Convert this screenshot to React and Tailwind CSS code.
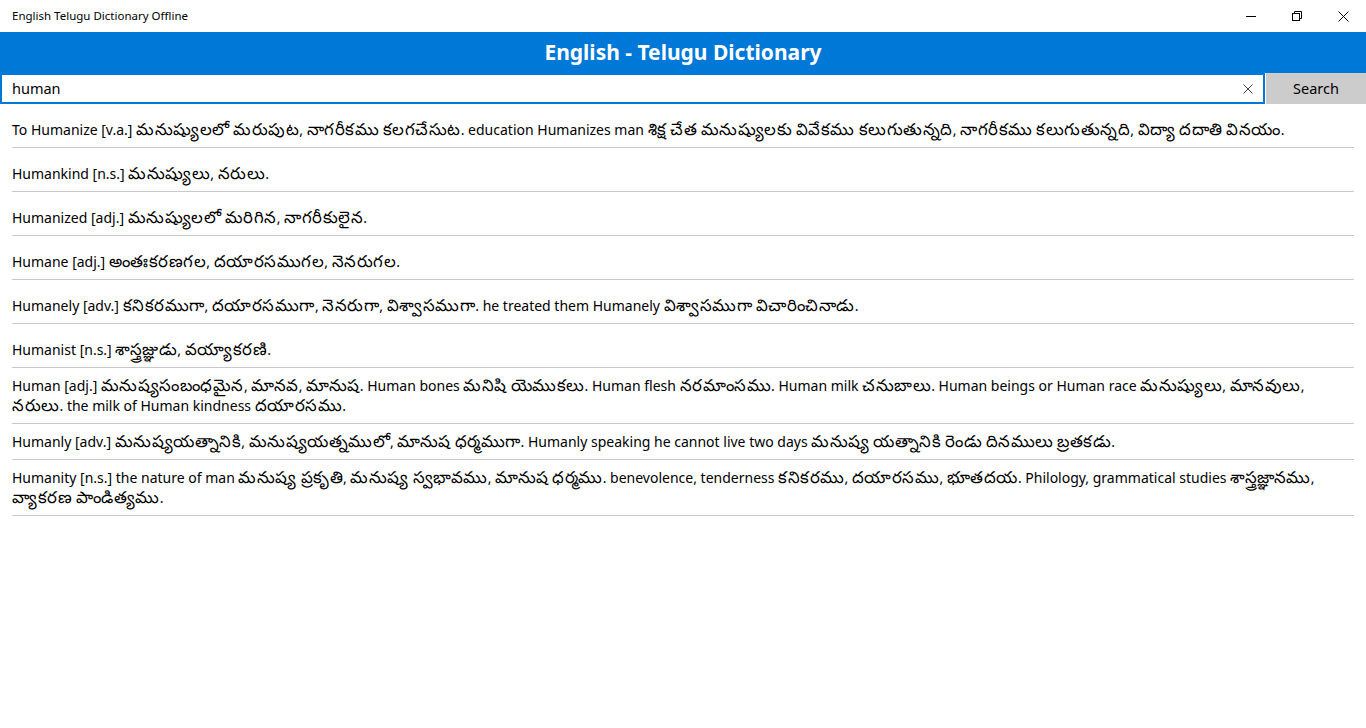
import React, { useState } from "react";

const entries = [
  {
    pad: "pt-[16px] pb-[7px]",
    text: "To Humanize [v.a.] మనుష్యులలో మరుపుట, నాగరీకము కలగచేసుట. education Humanizes man శిక్ష చేత మనుష్యులకు వివేకము కలుగుతున్నది, నాగరీకము కలుగుతున్నది, విద్యా దదాతి వినయం.",
  },
  { pad: "pt-[16px] pb-[7px]", text: "Humankind [n.s.] మనుష్యులు, నరులు." },
  { pad: "pt-[16px] pb-[7px]", text: "Humanized [adj.] మనుష్యులలో మరిగిన, నాగరీకులైన." },
  { pad: "pt-[16px] pb-[7px]", text: "Humane [adj.] అంతఃకరణగల, దయారసముగల, నెనరుగల." },
  {
    pad: "pt-[16px] pb-[7px]",
    text: "Humanely [adv.] కనికరముగా, దయారసముగా, నెనరుగా, విశ్వాసముగా. he treated them Humanely విశ్వాసముగా విచారించినాడు.",
  },
  { pad: "pt-[16px] pb-[7px]", text: "Humanist [n.s.] శాస్త్రజ్ఞుడు, వయ్యాకరణి." },
  {
    pad: "pt-[8px] pb-[7px]",
    text: "Human [adj.] మనుష్యసంబంధమైన, మానవ, మానుష. Human bones మనిషి యెముకలు. Human flesh నరమాంసము. Human milk చనుబాలు. Human beings or Human race మనుష్యులు, మానవులు, నరులు. the milk of Human kindness దయారసము.",
  },
  {
    pad: "pt-[8px] pb-[7px]",
    text: "Humanly [adv.] మనుష్యయత్నానికి, మనుష్యయత్నములో, మానుష ధర్మముగా. Humanly speaking he cannot live two days మనుష్య యత్నానికి రెండు దినములు బ్రతకడు.",
  },
  {
    pad: "pt-[8px] pb-[7px]",
    text: "Humanity [n.s.] the nature of man మనుష్య ప్రకృతి, మనుష్య స్వభావము, మానుష ధర్మము. benevolence, tenderness కనికరము, దయారసము, భూతదయ. Philology, grammatical studies శాస్త్రజ్ఞానము, వ్యాకరణ పాండిత్యము.",
  },
];

const font = { fontFamily: '"Noto Sans", "Open Sans", sans-serif' };

// Telugu runs are set a bit larger and looser, the way the app's Telugu face is wider
const Entry = ({ text }) =>
  text.split(/([\u0C00-\u0C7F]+)/).map((part, i) =>
    /[\u0C00-\u0C7F]/.test(part) ? (
      <span key={i} className="text-[16.6px] leading-[0px] tracking-[0.5px]">
        {part}
      </span>
    ) : (
      <span key={i}>{part}</span>
    )
  );

export default function App() {
  const [query, setQuery] = useState("human");

  return (
    <div className="w-[1366px] h-[728px] bg-white flex flex-col overflow-hidden text-black" style={font}>
      {/* title bar */}
      <div className="h-[32px] flex items-center justify-between shrink-0">
        <span className="pl-[12px] text-[11.5px]">English Telugu Dictionary Offline</span>
        <div className="flex h-full">
          <button className="w-[46px] h-full flex items-center justify-center">
            <svg width="10" height="10" viewBox="0 0 10 10">
              <path d="M0 5.5h10" stroke="#000" strokeWidth="1" />
            </svg>
          </button>
          <button className="w-[46px] h-full flex items-center justify-center">
            <svg width="10" height="10" viewBox="0 0 10 10" fill="none" stroke="#000" strokeWidth="1">
              <rect x="0.5" y="2.5" width="7" height="7" />
              <path d="M2.5 2.5v-2h7v7h-2" />
            </svg>
          </button>
          <button className="w-[46px] h-full flex items-center justify-center">
            <svg width="11" height="11" viewBox="0 0 11 11" stroke="#000" strokeWidth="1">
              <path d="M0.5 0.5l10 10M10.5 0.5l-10 10" />
            </svg>
          </button>
        </div>
      </div>

      {/* header */}
      <div className="h-[41px] bg-[#0078d7] flex items-center justify-center shrink-0">
        <h1 className="text-white font-bold text-[21px]">English - Telugu Dictionary</h1>
      </div>

      {/* search row */}
      <div className="h-[31px] flex shrink-0">
        <div className="flex-1 flex items-center border-2 border-[#0078d7] bg-white">
          <input
            value={query}
            onChange={(e) => setQuery(e.target.value)}
            className="flex-1 outline-none pl-[10px] text-[14.5px] bg-transparent"
            style={font}
          />
          <button className="w-[30px] h-full flex items-center justify-center" onClick={() => setQuery("")}>
            <svg width="10" height="10" viewBox="0 0 10 10" stroke="#444" strokeWidth="1">
              <path d="M0.5 0.5l9 9M9.5 0.5l-9 9" />
            </svg>
          </button>
        </div>
        <button className="w-[100px] h-full bg-[#cccccc] text-[14.5px] ml-[1px] flex items-center justify-center">
          Search
        </button>
      </div>

      {/* results */}
      <div className="flex-1 overflow-y-auto px-[12px]">
        {entries.map((e, i) => (
          <div key={i} className={`${e.pad} border-b border-[#c8c8c8] text-[14px] leading-[20px]`}>
            <Entry text={e.text} />
          </div>
        ))}
      </div>
    </div>
  );
}
